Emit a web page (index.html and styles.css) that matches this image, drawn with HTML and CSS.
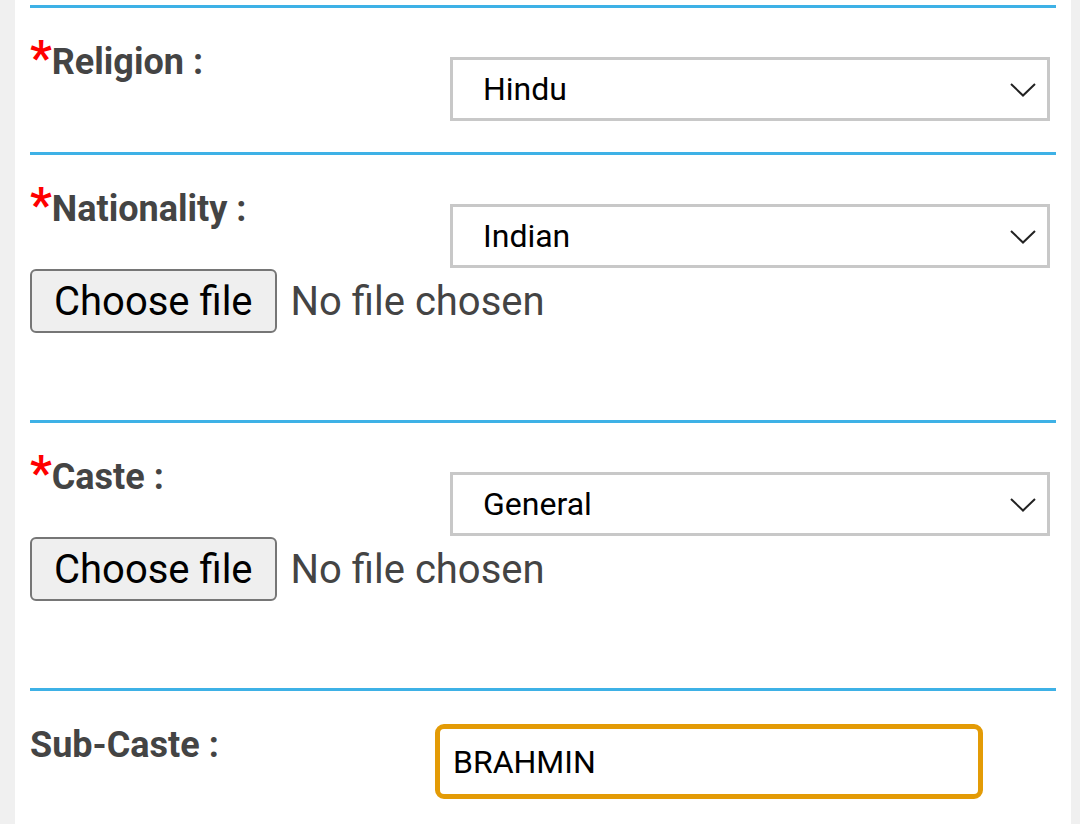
FILE: index.html
```html
<!DOCTYPE html>
<html lang="en">

<head>
	<meta charset="utf-8" />
	<meta name="viewport" content="width=device-width, initial-scale=1" />
	<title>Personal Details</title>
	<link rel="stylesheet" href="styles.css">
</head>

<body>
	<div class="panel">
		<div class="section">
			<div class="row">
				<label class="label"><span class="req">*</span>Religion :</label>
				<div class="select-wrap">
					<select name="religion">
						<option>Hindu</option>
					</select>
					<svg class="chevron" width="26" height="14" viewBox="0 0 26 14"><polyline points="1,1 13,12.5 25,1" /></svg>
				</div>
			</div>
		</div>

		<div class="section">
			<div class="row">
				<label class="label"><span class="req">*</span>Nationality :</label>
				<div class="select-wrap">
					<select name="nationality">
						<option>Indian</option>
					</select>
					<svg class="chevron" width="26" height="14" viewBox="0 0 26 14"><polyline points="1,1 13,12.5 25,1" /></svg>
				</div>
			</div>
			<div class="file-row">
				<button type="button" class="file-btn">Choose file</button>
				<span class="file-name">No file chosen</span>
			</div>
		</div>

		<div class="section">
			<div class="row">
				<label class="label"><span class="req">*</span>Caste :</label>
				<div class="select-wrap">
					<select name="caste">
						<option>General</option>
					</select>
					<svg class="chevron" width="26" height="14" viewBox="0 0 26 14"><polyline points="1,1 13,12.5 25,1" /></svg>
				</div>
			</div>
			<div class="file-row">
				<button type="button" class="file-btn">Choose file</button>
				<span class="file-name">No file chosen</span>
			</div>
		</div>

		<div class="section section-text">
			<div class="row">
				<label class="label label-narrow">Sub-Caste :</label>
				<input type="text" name="subcaste" class="text-input" value="BRAHMIN">
			</div>
		</div>
	</div>
</body>

</html>
```

FILE: styles.css
```css
body {
	background-color: #f0f0f0;
	font-family: Roboto, "Liberation Sans", Arial, sans-serif;
	margin: 0;
}
.panel {
	background-color: #ffffff;
	margin: 0 9px 0 15px;
	padding: 5px 15px 0 15px;
	min-height: 100vh;
	box-sizing: border-box;
}
.section {
	border-top: solid 3px #3eb1e6;
	padding: 33px 0 31px 0;
}
.row {
	display: flex;
	align-items: flex-start;
}
.label {
	width: 420px;
	flex-shrink: 0;
	color: #444444;
	font-size: 36px;
	font-weight: 700;
	line-height: 42px;
}
.label-narrow {
	width: 405px;
}
.req {
	color: #ff0000;
	font-size: 48px;
	line-height: 0;
}
.select-wrap {
	position: relative;
	margin-top: 16px;
}
.select-wrap select {
	appearance: none;
	-webkit-appearance: none;
	display: block;
	width: 600px;
	height: 64px;
	box-sizing: border-box;
	border: solid 3px #c8c8c8;
	border-radius: 0;
	background-color: #ffffff;
	color: #000000;
	font-family: Roboto, "Liberation Sans", Arial, sans-serif;
	font-size: 32px;
	padding: 0 60px 0 30px;
	outline: none;
}
.chevron {
	position: absolute;
	right: 14px;
	top: 26px;
	pointer-events: none;
	fill: none;
	stroke: #222222;
	stroke-width: 2;
}
.file-row {
	display: flex;
	align-items: center;
	margin: 1px 0 56px 0;
}
.file-btn {
	height: 64px;
	box-sizing: border-box;
	border: solid 2px #767676;
	border-radius: 6px;
	background-color: #efefef;
	color: #000000;
	font-family: Roboto, "Liberation Sans", Arial, sans-serif;
	font-size: 40px;
	padding: 0 22px;
	margin: 0;
}
.file-name {
	margin-left: 14px;
	color: #444444;
	font-size: 40px;
}
.section-text {
	padding-top: 33px;
}
.text-input {
	width: 548px;
	height: 75px;
	box-sizing: border-box;
	border: solid 5px #e39b06;
	border-radius: 9px;
	padding: 0 13px;
	font-family: Roboto, "Liberation Sans", Arial, sans-serif;
	font-size: 32px;
	color: #000000;
	outline: none;
}
```
